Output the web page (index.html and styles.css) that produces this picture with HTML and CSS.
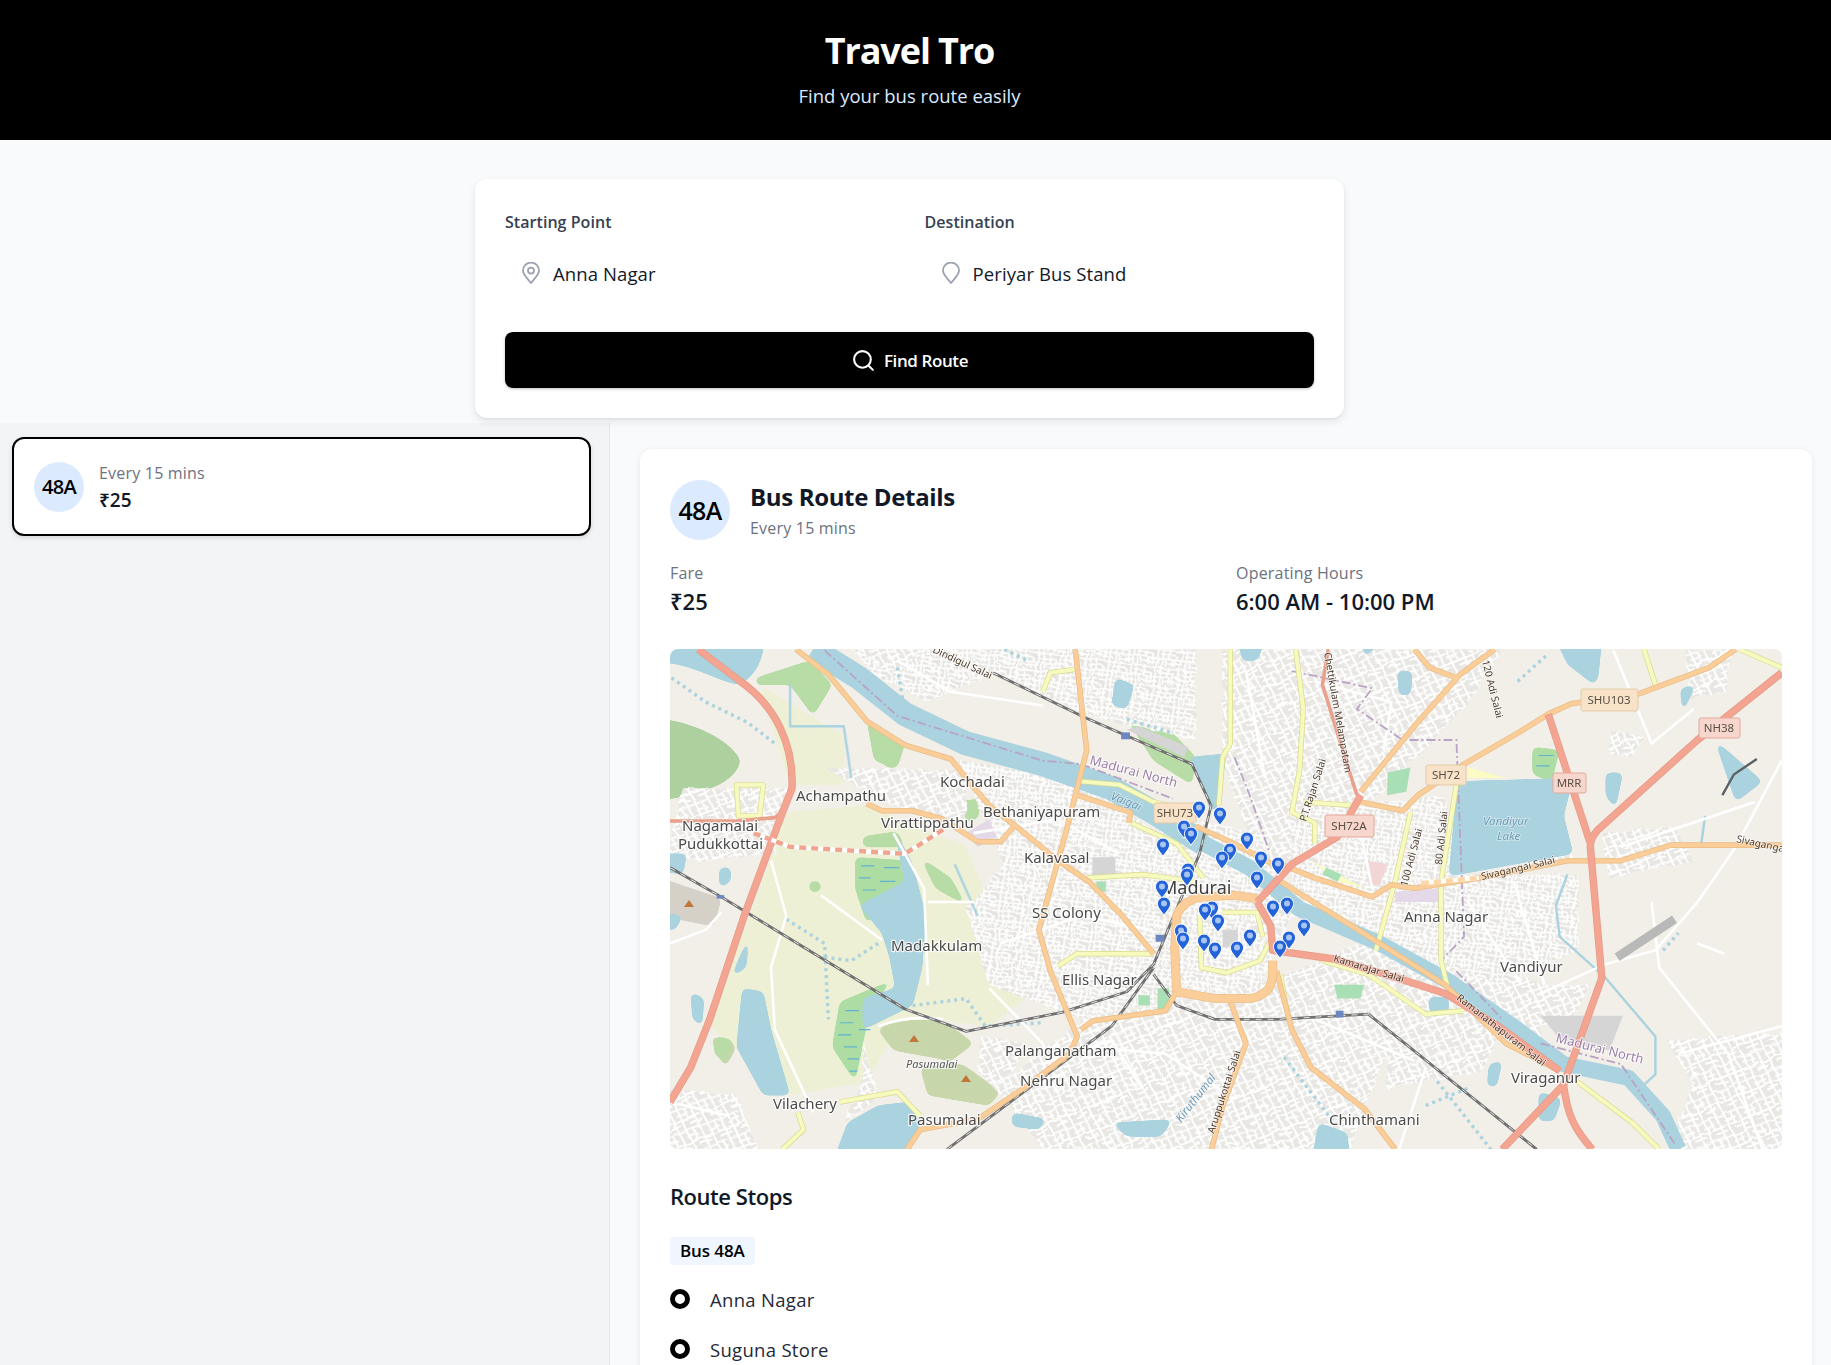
FILE: index.html
```html
<!DOCTYPE html>
<html lang="en">
<head>
<meta charset="utf-8">
<title>Travel Tro</title>
<link rel="stylesheet" href="styles.css">
</head>
<body>
<header class="hero">
  <h1 class="hero-title">Travel Tro</h1>
  <p class="hero-sub">Find your bus route easily</p>
</header>

<section class="search-area">
  <form class="search-card">
    <div class="fields">
      <div class="field">
        <div class="field-label">Starting Point</div>
        <div class="field-input">
          <svg class="field-icon" viewBox="0 0 20 22"><path d="M10 21C6.5 16.5 2 13 2 8.6a8 8 0 0 1 16 0C18 13 13.5 16.5 10 21Z"/><circle cx="10" cy="8.6" r="3"/></svg>
          <span>Anna Nagar</span>
        </div>
      </div>
      <div class="field">
        <div class="field-label">Destination</div>
        <div class="field-input">
          <svg class="field-icon" viewBox="0 0 20 22"><path d="M10 21C6.5 16.5 2 13 2 8.6a8 8 0 0 1 16 0C18 13 13.5 16.5 10 21Z"/></svg>
          <span>Periyar Bus Stand</span>
        </div>
      </div>
    </div>
    <div class="find-btn">
      <svg class="find-icon" viewBox="0 0 24 24"><circle cx="11" cy="11" r="8"/><path d="m21 21-4.3-4.3"/></svg>
      <span>Find Route</span>
    </div>
  </form>
</section>

<div class="lower">
  <aside class="sidebar">
    <div class="route-card">
      <div class="badge-sm">48A</div>
      <div class="route-card-text">
        <div class="muted">Every 15 mins</div>
        <div class="route-fare">₹25</div>
      </div>
    </div>
  </aside>

  <main class="main">
    <article class="detail">
      <div class="detail-head">
        <div class="badge-lg">48A</div>
        <div class="detail-title-box">
          <h2 class="detail-title">Bus Route Details</h2>
          <div class="muted">Every 15 mins</div>
        </div>
      </div>
      <div class="facts">
        <div>
          <div class="muted">Fare</div>
          <div class="fact-value">₹25</div>
        </div>
        <div>
          <div class="muted">Operating Hours</div>
          <div class="fact-value">6:00 AM - 10:00 PM</div>
        </div>
      </div>

      <div class="map">
        <svg class="map-svg" viewBox="0 0 1112 500" width="1112" height="500">
          <defs>
            <pattern id="st1" width="62" height="54" patternUnits="userSpaceOnUse" patternTransform="rotate(8)">
              <rect width="62" height="54" fill="#e6e4e0"/>
              <path d="M0 7H62M0 20H40M0 33H62M20 46H62M7 0V54M24 0V33M42 20V54M55 0V54M33 33V54M16 33V54" stroke="#fff" stroke-width="5" fill="none" class="plain"/>
            </pattern>
            <pattern id="st2" width="58" height="66" patternUnits="userSpaceOnUse" patternTransform="rotate(-24)">
              <rect width="58" height="66" fill="#e9e7e3"/>
              <path d="M0 10H58M0 28H34M0 44H58M24 58H58M8 0V66M26 10V44M44 0V66" stroke="#fff" stroke-width="5.4" fill="none" class="plain"/>
            </pattern>
            <filter id="wobble" x="0" y="0" width="100%" height="100%">
              <feTurbulence type="fractalNoise" baseFrequency="0.03" numOctaves="2" seed="7"/>
              <feDisplacementMap in="SourceGraphic" scale="16"/>
            </filter>
            <filter id="goo" x="-5%" y="-5%" width="110%" height="110%" color-interpolation-filters="sRGB">
              <feGaussianBlur stdDeviation="9"/>
              <feComponentTransfer><feFuncA type="linear" slope="14" intercept="-6"/></feComponentTransfer>
            </filter>
            <path id="pin" d="M0 10.4C-1.8 6.9-6.6 3.2-6.6-1.4A6.6 6.6 0 1 1 6.6-1.4C6.6 3.2 1.8 6.9 0 10.4Z"/>
            <g id="salmon">
              <path d="M100 27 210 120C300 190 350 300 345 430L320 500 220 800 130 1100 80 1240 26 1340"/>
              <g transform="translate(1411)">
                <path d="M1520 95 1300 290 1040 550C1025 570 1020 580 1020 600L1050 980 950 1290 790 1477"/>
                <path d="M910 215 1020 590"/>
                <path d="M950 1290C960 1380 980 1420 1025 1477"/>
                <path d="M420 450 360 570 240 650 150 760"/>
                <path d="M150 760 185 830 190 900 350 925 530 985 640 1025 780 1120 940 1250"/>
              </g>
            </g>
            <g id="salmonThin">
              <path d="M26 525H200L300 515 330 490"/>
              <g transform="translate(1411)"><path d="M335 27 320 130 410 450"/></g>
            </g>
            <g id="orange">
              <path d="M355 27 440 100 540 235 640 305 760 345 800 400 860 480 930 540 1040 640 1120 700 1200 790 1290 910"/>
              <path d="M540 475 580 495H660L740 520 830 585H890L925 540"/>
              <path d="M1085 27 1115 320 1060 560 990 840 1020 960 1090 1150 1070 1200 950 1300 830 1390 680 1420 645 1477"/>
              <path d="M1100 1130 1130 1105 1320 1075 1350 1020"/>
              <path d="M1090 450 1230 500 1225 530"/>
              <path d="M1400 540 1500 590 1600 650"/>
              <g transform="translate(1411)">
                <path d="M210 650 300 690 450 745 500 710 560 720 730 690 960 640H1100L1230 595H1520"/>
                <path d="M420 470 530 495 570 450 610 420 690 360 830 270 910 215 970 185 1150 155 1330 80 1400 27"/>
                <path d="M420 440 560 250 680 100 770 27"/>
                <path d="M560 27 600 80 670 110"/>
                <path d="M200 960 240 1130 290 1240 430 1360 510 1477"/>
                <path d="M80 1050 120 1170 60 1350 30 1477"/>
                <path d="M210 700 470 880 640 1000 800 1170 940 1250"/>
              </g>
            </g>
            <g id="ring">
              <path d="M1350 1020 1345 900 1350 800C1360 770 1380 750 1420 745L1500 740 1560 750"/>
              <path d="M1350 1020 1450 1040H1541C1590 1030 1600 1000 1601 970V930"/>
            </g>
            <g id="yellow">
              <path d="M1000 150 1020 95 1085 85"/>
              <path d="M1100 410 1200 420 1290 470 1330 480"/>
              <path d="M1115 690 1260 680 1400 700"/>
              <path d="M1040 945 1090 910H1290"/>
              <path d="M1490 27V300L1470 340 1460 480"/>
              <path d="M1230 530 1350 590 1420 690"/>
              <path d="M1410 800 1415 950 1480 965 1568 930 1600 860"/>
              <path d="M1470 790 1560 790 1575 860"/>
              <path d="M200 420H270L260 510H205Z"/>
              <path d="M470 1340 620 1310 680 1380"/>
              <path d="M360 1370 375 1420 320 1477"/>
              <g transform="translate(1411)">
                <path d="M250 27 270 200 260 380 240 500 300 530 300 590"/>
                <path d="M270 470 400 480"/>
                <path d="M550 500 510 700 460 900"/>
                <path d="M670 420 630 700V930L650 1020"/>
                <path d="M320 930 440 970 590 1085 690 1075"/>
                <path d="M210 970 230 1090"/>
                <path d="M985 1280 1130 1400 1200 1477"/>
                <path d="M1160 27 1190 130"/>
                <path d="M1410 27 1520 80"/>
              </g>
            </g>
            <g id="rail">
              <path d="M26 660 160 745 640 1070 800 1135 1050 1080 1220 1020 1290 940 1410 620 1440 480 1390 360 1110 225 870 95"/>
              <path d="M750 1477 1180 1120 1290 950"/>
              <path d="M1290 970 1350 1060 1450 1100H1611L1851 1085"/>
              <g transform="translate(1411)"><path d="M440 1085 880 1477"/></g>
            </g>
          </defs>

          <rect class="land" width="1112" height="500"/>
          <g transform="translate(-10 -9) scale(.3827 .34483)">
            <!-- land use -->
            <g filter="url(#goo)">
              <path class="farm" d="M330 500 540 480 800 600 870 800 1000 1000 860 1120 640 1090 540 1280 340 1320 130 1120 300 600Z"/>
              <path class="farm" d="M260 130 480 280V420H340Z"/>
              <path class="farm" d="M1130 1090 1320 1090 1290 1130 1150 1140Z"/>
            </g>
            <g filter="url(#goo)">
              <path class="forest" d="M0 230C100 240 190 300 210 350 200 400 150 440 0 465Z"/>
              <path class="scrub" d="M570 1130C600 1100 720 1090 760 1120L820 1170 760 1220 610 1190Z"/>
              <path class="scrub" d="M680 1240 790 1230 890 1310 860 1350 700 1320Z"/>
              <path class="scrub" d="M130 1150 200 1180 170 1240Z"/>
              <path class="scrub" d="M50 1310 170 1370 130 1390 60 1350Z"/>
              <path class="rock" d="M0 690 160 750 140 830 0 800Z"/>
              <path class="grassy" d="M250 110 390 60 450 130 400 220 340 130 250 130Z"/>
              <path class="grassy" d="M540 230 640 300 620 370 560 350Z"/>
              <path class="grassy" d="M610 400 700 390 760 420 720 460 620 440Z"/>
              <path class="grassy" d="M770 470 840 460 830 520 770 530Z"/>
              <path class="grassy" d="M530 570 620 555 640 600 530 600Z"/>
              <path class="grassy" d="M680 630 760 690 800 770 720 720Z"/>
              <path class="grassy" d="M1220 230 1340 270 1400 340 1390 420 1290 350Z"/>
              <path class="grassy" d="M590 330H620V370H590Z"/>
              <path class="grassy" d="M390 700H420V730H390Z"/>
              <path class="grassy" d="M150 1150 190 1160 170 1220 140 1200Z"/>
            </g>
            <!-- streets -->
            <g filter="url(#wobble)">
              <path class="urban-a" d="M500 27H1400V290L1120 220 870 95 700 180 560 100Z"/>
              <path class="urban-a" d="M780 350 1100 400 1300 560 1360 900 1290 1050 1100 1100 860 1000 800 780 900 650Z"/>
              <path class="urban-b" d="M1100 1100 1568 1000 2000 800 2300 1000V1150L1900 1200 1800 1477H1000L880 1300Z"/>
              <path class="urban-b" d="M1470 27H2200L2100 200 1850 480 1800 650 1568 660 1470 350Z"/>
              <path class="urban-a" d="M1300 500 1568 560 1650 800 1568 1000 1300 1050Z"/>
              <path class="urban-a" d="M1650 500 2050 450 2090 680H2400V900L2200 1000 1650 800Z"/>
              <path class="urban-b" d="M60 430H340L300 620 100 640 20 620Z"/>
              <path class="urban-b" d="M430 370 800 380V530L600 480Z"/>
              <path class="urban-b" d="M20 1300 200 1320 260 1490H20Z"/>
              <path class="urban-b" d="M530 1150 570 1330 480 1400 530 1270Z"/>
              <path class="urban-b" d="M840 1150 960 1170 890 1320 830 1250Z"/>
              <path class="urban-b" d="M520 27H700L600 100Z"/>
              <path class="urban-b" d="M2460 560 2650 540 2700 640 2480 690Z"/>
              <path class="urban-b" d="M2630 1160 2940 1140V1490H2630L2700 1290Z"/>
              <path class="urban-b" d="M2220 500 2350 510 2390 640 2230 640Z"/>
              <path class="urban-b" d="M2260 1000 2430 1000 2380 1110 2260 1130Z"/>
              <path class="urban-b" d="M2680 30H2800L2780 150 2690 170Z"/>
              <path class="urban-b" d="M2480 260 2570 280 2540 340 2480 330Z"/>
              <path class="urban-b" d="M1900 1150 2200 1130 2150 1250 1900 1300Z"/>
            </g>
            <!-- patches -->
            <path class="pink" d="M1851 640 1901 650 1881 710H1851Z"/>
            <path class="lilac" d="M1921 730 2031 720 2051 760H1921Z"/>
            <path class="pale" d="M1701 640 1841 720 1771 700Z"/>
            <path class="pale" d="M2111 370 2211 400 2111 400Z"/>
            <path class="lilac" d="M800 560 860 520 880 570 830 600Z"/>
            <path class="gray" d="M2301 1090H2516L2481 1190 2361 1170Z"/>
            <path class="gray" d="M1470 840H1510V890H1470Z"/>
            <path class="gray" d="M1130 630H1190V690H1130Z"/>
            <path class="park" d="M1761 1000H1840L1830 1040H1770Z"/>
            <path class="park" d="M1901 385 1961 370 1950 440 1900 450Z"/>
            <path class="park" d="M1250 1030 1280 1030 1280 1060 1250 1060Z"/>
            <path class="park" d="M1300 1010 1330 1010 1330 1070 1300 1070Z"/>
            <path class="park" d="M1140 700H1165V730H1140Z"/>
            <path class="park" d="M1741 660 1781 680 1771 700 1731 680Z"/>
            <g filter="url(#goo)">
              <path class="wetland" d="M510 630 650 640 620 760 540 820 510 720Z"/>
              <path class="wetland" d="M470 1050 610 985 550 1060 510 1280 450 1180Z"/>
              <path class="wetland" d="M2280 310 2350 320 2330 410 2280 390Z"/>
            </g>
            <path class="wet-lines" d="M525 655H560M585 660H625M520 690H550M575 700H615M530 725H565M585 735H610M540 765H575M550 795H575M485 1075H520M545 1045H590M470 1110H505M530 1090H565M465 1145H500M520 1130H550M480 1180H515M490 1215H520M495 1250H515M2295 335H2335M2290 365H2325"/>
            <path class="gray" d="M1250 250 1380 310 1370 340 1220 260Z"/>
            <!-- water -->
            <g filter="url(#goo)">
              <path class="water" d="M0 65C80 65 150 120 210 130 250 100 270 60 272 0H0Z"/>
              <path class="water" d="M610 540 660 650 695 800 685 950 660 1060 530 1130 530 1040 615 1010 600 920 580 850 520 770 640 700Z"/>
              <path class="water" d="M215 1010 270 1020 290 1130 340 1320 270 1320 200 1180Z"/>
              <path class="water" d="M460 1490 490 1400 570 1350 650 1340 680 1400 650 1490Z"/>
              <path class="water" d="M1180 1400 1340 1390 1310 1440 1220 1440Z"/>
              <path class="water" d="M920 1370 1010 1390 990 1420 920 1410Z"/>
              <path class="water" d="M1380 340 1480 330 1460 480 1440 500 1400 370Z"/>
              <path class="water" d="M1190 110 1240 130 1220 200 1180 190Z"/>
              <path class="water" d="M0 620 70 620 60 680 0 670Z"/>
              <path class="water" d="M0 790 60 800 40 840 0 840Z"/>
              <path class="water" d="M80 1020 115 1040 110 1120 85 1100Z"/>
              <path class="water" d="M185 980 235 850 225 950Z"/>
              <path class="water" d="M155 660 185 660 185 700 155 720Z"/>
              <g transform="translate(1411)">
                <path class="water" d="M680 410 975 400 950 510 975 620 650 685 670 440Z"/>
                <path class="water" d="M930 0H1050L1040 110 1030 130 960 70Z"/>
                <path class="water" d="M100 0H170L150 60H110Z"/>
                <path class="water" d="M420 0H480L430 50Z"/>
                <path class="water" d="M515 90H555L550 160 520 160Z"/>
                <path class="water" d="M1060 385 1105 385 1085 490 1060 450Z"/>
                <path class="water" d="M1345 290 1470 410 1400 470Z"/>
                <path class="water" d="M295 1490 310 1400 385 1430 390 1490Z"/>
                <path class="water" d="M1255 140 1295 130 1260 215Z"/>
                <path class="water" d="M885 1310 945 1330 925 1395 885 1395Z"/>
                <path class="water" d="M755 1230 790 1220 775 1295 750 1295Z"/>
                <path class="water" d="M598 1035H650V1080H598Z"/>
              </g>
            </g>
            <g class="stream">
              <path d="M340 130V250H480L500 400"/>
              <path d="M770 650 830 800"/>
              <g transform="translate(1411)">
                <path d="M1060 980 1190 1150V1260L1150 1300"/>
                <path d="M960 680 930 770 940 860 1030 950 1060 980"/>
                <path d="M1320 510 1310 590"/>
              </g>
            </g>
            <path class="river-w" d="M400 27 520 110 640 215 800 300 1000 360 1180 430 1290 500 1420 590"/>
            <path class="river-e" d="M1420 590 1540 660 1671 780 1881 880 2061 990 2241 1130 2361 1230 2531 1270 2621 1380 2661 1477"/>
            <g class="dots">
              <path d="M30 110 120 180 230 240 300 300"/>
              <path d="M620 80 640 210"/>
              <path d="M330 810 430 880 440 1100"/>
              <path d="M430 920 500 930 570 880"/>
              <path d="M660 1060 800 1040 850 1120 1000 1110"/>
              <path d="M1220 230 1340 270"/>
              <path d="M900 27 960 60"/>
              <g transform="translate(1411)">
                <path d="M830 120 910 40"/>
                <path d="M590 1350 700 1300"/>
                <path d="M220 1210 350 1400"/>
                <path d="M620 1280 760 1477"/>
                <path d="M1210 900 1250 850"/>
              </g>
            </g>
            <g class="white-road">
              <path d="M26 880 120 840 160 790"/>
              <path d="M290 640 330 800 290 950 300 1130 400 1370"/>
              <path d="M610 560 690 720 700 1000"/>
              <path d="M420 740 580 870"/>
              <path d="M26 1340 180 1380"/>
              <path d="M700 760H820"/>
              <path d="M570 1120C620 1100 680 1090 740 1100"/>
              <path d="M860 1010 1000 1170 1040 1300"/>
              <path d="M890 880 1100 800 1280 840"/>
              <path d="M820 560 1040 520 1200 620"/>
              <path d="M620 60 760 150 1000 190"/>
              <path d="M1120 1180 1320 1200 1500 1330"/>
              <path d="M1000 1230 1180 1160 1260 1300"/>
              <g transform="translate(1411)">
                <path d="M1520 350 1400 600 1300 760 1190 900 1060 940 880 1030"/>
                <path d="M1180 760 1200 950 1380 1200 1470 1477"/>
                <path d="M1100 600 1450 470"/>
                <path d="M420 560 450 720"/>
                <path d="M520 1477 590 1240"/>
                <path d="M1250 1200 1520 1120"/>
                <path d="M700 760 840 1000"/>
                <path d="M820 700 900 1000"/>
                <path d="M300 1100 560 1220"/>
                <path d="M1080 30 1180 300 1290 200"/>
                <path d="M120 90 170 400"/>
                <path d="M300 120 500 180 480 320"/>
                <path d="M1300 880 1370 910"/>
              </g>
            </g>
            <g class="admin">
              <path d="M430 30 620 220 1000 350 1100 360 1340 460"/>
              <g transform="translate(1411)">
                <path d="M890 1170 1100 1230 1240 1460"/>
                <path d="M90 340 130 450 180 610"/>
                <path d="M240 90 450 140 410 200 530 290H670L690 860 630 930"/>
                <path d="M670 960 790 1100"/>
              </g>
            </g>
            <use href="#yellow" class="r-ye-c"/>
            <use href="#yellow" class="r-ye"/>
            <use href="#rail" class="r-rail-c"/>
            <use href="#rail" class="r-rail"/>
            <use href="#orange" class="r-or-c"/>
            <use href="#orange" class="r-or"/>
            <use href="#ring" class="r-ring-c"/>
            <use href="#ring" class="r-ring"/>
            <use href="#salmonThin" class="r-sa-thin"/>
            <use href="#salmon" class="r-sa-c"/>
            <use href="#salmon" class="r-sa"/>
            <path class="dash-base" d="M245 560 340 600 640 620 740 550"/>
            <path class="dash-top" d="M245 560 340 600 640 620 740 550"/>
            <path class="dash-base" d="M1991 705 2140 690"/>
            <path class="dash-top2" d="M1991 705 2140 690"/>
            <path class="strip" d="M2501 920 2651 810"/>
            <path class="bridge" d="M2776 450 2806 390 2866 345"/>
            <path class="station" d="M1205 268H1228V288H1205Z"/>
            <path class="station" d="M1295 855H1318V875H1295Z"/>
            <path class="station" d="M1766 1075H1786V1095H1766Z"/>
            <path class="station" d="M148 740H168V750H148Z"/>
          </g>

          <!-- peaks -->
          <path class="peak" d="M19 251 24 258H14Z"/>
          <path class="peak" d="M244 386 249 393H239Z"/>
          <path class="peak" d="M296 426 301 433H291Z"/>

          <!-- labels -->
          <g class="labels">
            <text x="126" y="152">Achampathu</text>
            <text x="12" y="182">Nagamalai</text>
            <text x="8" y="200">Pudukkottai</text>
            <text x="211" y="179">Virattippathu</text>
            <text x="270" y="138">Kochadai</text>
            <text x="313" y="168">Bethaniyapuram</text>
            <text x="354" y="214">Kalavasal</text>
            <text x="362" y="269">SS Colony</text>
            <text x="221" y="302">Madakkulam</text>
            <text x="392" y="336">Ellis Nagar</text>
            <text x="335" y="407">Palanganatham</text>
            <text x="350" y="437">Nehru Nagar</text>
            <text x="238" y="476">Pasumalai</text>
            <text x="103" y="460">Vilachery</text>
            <text x="734" y="273">Anna Nagar</text>
            <text x="830" y="323">Vandiyur</text>
            <text x="841" y="434">Viraganur</text>
            <text x="659" y="476">Chinthamani</text>
            <text class="city" x="491" y="245">Madurai</text>
          </g>
          <text class="hill-label" x="236" y="419">Pasumalai</text>
          <g class="water-labels">
            <text x="813" y="176">Vandiyur</text>
            <text x="827" y="191">Lake</text>
            <text transform="translate(440 150) rotate(22)">Vaigai</text>
            <text transform="translate(511 474) rotate(-52)">Kiruthumal</text>
          </g>
          <g class="admin-labels">
            <text transform="translate(419 115) rotate(15)">Madurai North</text>
            <text transform="translate(885 393) rotate(14)">Madurai North</text>
          </g>
          <g class="road-labels">
            <text transform="translate(262 3) rotate(25)">Dindigul Salai</text>
            <text transform="translate(654 4) rotate(80)">Chettikulam Melampatam</text>
            <text transform="translate(636 173) rotate(-72)">P.T.Rajan Salai</text>
            <text transform="translate(737 238) rotate(-75)">100 Adi Salai</text>
            <text transform="translate(772 216) rotate(-84)">80 Adi Salai</text>
            <text transform="translate(812 12) rotate(76)">120 Adi Salai</text>
            <text transform="translate(812 231) rotate(-13)">Sivagangai Salai</text>
            <text transform="translate(1066 193) rotate(12)">Sivagangai</text>
            <text transform="translate(663 312) rotate(17)">Kamarajar Salai</text>
            <text transform="translate(786 350) rotate(38)">Ramanathapuram Salai</text>
            <text transform="translate(544 485) rotate(-72)">Aruppukottai Salai</text>
          </g>

          <!-- shields -->
          <g class="shield-or"><rect x="484" y="154" width="42" height="20" rx="2"/><text x="505" y="168">SHU73</text></g>
          <g class="shield-or"><rect x="911" y="40" width="57" height="22" rx="2"/><text x="939" y="55">SHU103</text></g>
          <g class="shield-or"><rect x="756" y="116" width="40" height="20" rx="2"/><text x="776" y="130">SH72</text></g>
          <g class="shield-re"><rect x="1029" y="69" width="41" height="20" rx="2"/><text x="1049" y="83">NH38</text></g>
          <g class="shield-re"><rect x="883" y="124" width="33" height="20" rx="2"/><text x="899" y="138">MRR</text></g>
          <g class="shield-re"><rect x="655" y="166" width="49" height="22" rx="2"/><text x="679" y="181">SH72A</text></g>

          <!-- stops -->
          <g class="pins">
            <g transform="translate(529 160)"><use href="#pin"/><circle r="3" cy="-1.5"/></g>
            <g transform="translate(550 166)"><use href="#pin"/><circle r="3" cy="-1.5"/></g>
            <g transform="translate(514 179)"><use href="#pin"/><circle r="3" cy="-1.5"/></g>
            <g transform="translate(521 186)"><use href="#pin"/><circle r="3" cy="-1.5"/></g>
            <g transform="translate(493 197)"><use href="#pin"/><circle r="3" cy="-1.5"/></g>
            <g transform="translate(518 222)"><use href="#pin"/><circle r="3" cy="-1.5"/></g>
            <g transform="translate(517 227)"><use href="#pin"/><circle r="3" cy="-1.5"/></g>
            <g transform="translate(492 239)"><use href="#pin"/><circle r="3" cy="-1.5"/></g>
            <g transform="translate(494 256)"><use href="#pin"/><circle r="3" cy="-1.5"/></g>
            <g transform="translate(511 283)"><use href="#pin"/><circle r="3" cy="-1.5"/></g>
            <g transform="translate(513 291)"><use href="#pin"/><circle r="3" cy="-1.5"/></g>
            <g transform="translate(534 293)"><use href="#pin"/><circle r="3" cy="-1.5"/></g>
            <g transform="translate(545 301)"><use href="#pin"/><circle r="3" cy="-1.5"/></g>
            <g transform="translate(567 300)"><use href="#pin"/><circle r="3" cy="-1.5"/></g>
            <g transform="translate(580 288)"><use href="#pin"/><circle r="3" cy="-1.5"/></g>
            <g transform="translate(542 260)"><use href="#pin"/><circle r="3" cy="-1.5"/></g>
            <g transform="translate(535 262)"><use href="#pin"/><circle r="3" cy="-1.5"/></g>
            <g transform="translate(548 273)"><use href="#pin"/><circle r="3" cy="-1.5"/></g>
            <g transform="translate(577 191)"><use href="#pin"/><circle r="3" cy="-1.5"/></g>
            <g transform="translate(560 202)"><use href="#pin"/><circle r="3" cy="-1.5"/></g>
            <g transform="translate(552 210)"><use href="#pin"/><circle r="3" cy="-1.5"/></g>
            <g transform="translate(591 210)"><use href="#pin"/><circle r="3" cy="-1.5"/></g>
            <g transform="translate(608 216)"><use href="#pin"/><circle r="3" cy="-1.5"/></g>
            <g transform="translate(587 230)"><use href="#pin"/><circle r="3" cy="-1.5"/></g>
            <g transform="translate(603 259)"><use href="#pin"/><circle r="3" cy="-1.5"/></g>
            <g transform="translate(617 256)"><use href="#pin"/><circle r="3" cy="-1.5"/></g>
            <g transform="translate(634 278)"><use href="#pin"/><circle r="3" cy="-1.5"/></g>
            <g transform="translate(619 290)"><use href="#pin"/><circle r="3" cy="-1.5"/></g>
            <g transform="translate(610 299)"><use href="#pin"/><circle r="3" cy="-1.5"/></g>
          </g>
        </svg>
      </div>

      <h3 class="stops-title">Route Stops</h3>
      <div class="bus-tag">Bus 48A</div>
      <ul class="stops">
        <li class="stop"><span class="stop-dot"></span>Anna Nagar</li>
        <li class="stop"><span class="stop-dot"></span>Suguna Store</li>
      </ul>
    </article>
  </main>
</div>
</body>
</html>
```

FILE: styles.css
```css
* { box-sizing: border-box; }
html, body { margin: 0; height: 1365px; overflow: hidden; }
body {
  width: 1831px;
  background: #f9fafb;
  color: #111827;
  font-family: "Open Sans", "Noto Sans", sans-serif;
}

.hero {
  height: 140px;
  padding: 30px 12px 0 0;
  background: #000;
  color: #fff;
  text-align: center;
}
.hero-title { margin: 0; font-size: 36px; line-height: 42px; font-weight: 700; letter-spacing: -1.1px; }
.hero-sub { margin: 11px 0 0; font-size: 18.5px; line-height: 26px; color: #dbeafe; }

.search-area { height: 283px; padding: 39px 12px 0 0; display: flex; justify-content: center; position: relative; z-index: 2; }
.search-card {
  width: 869px;
  height: 239px;
  padding: 30px;
  background: #fff;
  border-radius: 12px;
  box-shadow: 0 4px 8px rgba(0,0,0,.08), 0 1px 3px rgba(0,0,0,.06);
}
.fields { display: grid; grid-template-columns: 1fr 1fr; gap: 30px; }
.field-label { margin-top: 1px; font-size: 16px; line-height: 24px; font-weight: 600; color: #374151; letter-spacing: .05px; }
.field-input { display: flex; align-items: center; gap: 12px; height: 40px; margin-top: 19px; padding-left: 16px; font-size: 18.5px; letter-spacing: .1px; color: #111827; }
.field-icon { width: 20px; height: 22px; fill: none; stroke: #9ca3af; stroke-width: 1.8; stroke-linecap: round; stroke-linejoin: round; }
.find-btn {
  display: flex; align-items: center; justify-content: center; gap: 8px;
  height: 56px; margin-top: 39px;
  background: #000; color: #fff; border-radius: 8px;
  font-size: 17px; font-weight: 600; letter-spacing: -.4px;
  box-shadow: 0 1px 3px rgba(0,0,0,.25);
}
.find-icon { width: 25px; height: 25px; fill: none; stroke: #fff; stroke-width: 2; stroke-linecap: round; stroke-linejoin: round; }

.lower { display: flex; height: 942px; }
.sidebar { width: 610px; padding: 14px 18px 0 12px; background: #f3f4f6; border-right: 1px solid #e5e7eb; }
.route-card {
  display: flex; align-items: center; gap: 15px;
  height: 99px; padding: 0 20px;
  background: #fff; border: 2px solid #000; border-radius: 12px;
  box-shadow: 0 2px 5px rgba(0,0,0,.12);
}
.badge-sm, .badge-lg { display: flex; align-items: center; justify-content: center; flex: none; border-radius: 50%; background: #dbeafe; color: #000; font-weight: 600; }
.badge-sm { width: 50px; height: 50px; font-size: 20px; letter-spacing: -.7px; }
.muted { font-size: 16px; line-height: 24px; color: #6b7280; letter-spacing: .2px; }
.route-fare { margin-top: 2px; font-size: 19px; line-height: 26px; font-weight: 600; color: #111827; }

.main { flex: 1; padding: 26px 19px 0 30px; }
.detail { height: 1000px; padding: 30px; background: #fff; border-radius: 12px; box-shadow: 0 1px 6px rgba(0,0,0,.08); }
.detail-head { display: flex; align-items: center; gap: 20px; }
.badge-lg { width: 60px; height: 60px; font-size: 25px; letter-spacing: -.7px; }
.detail-title-box { padding-top: 2px; }
.detail-title { margin: 0 0 3px; font-size: 24px; line-height: 32px; font-weight: 700; color: #111827; letter-spacing: -.35px; }
.facts { display: grid; grid-template-columns: 1fr 1fr; gap: 20px; margin-top: 21px; }
.fact-value { font-size: 22px; line-height: 32px; font-weight: 600; color: #111827; }

.map { height: 500px; margin-top: 32px; border-radius: 8px; overflow: hidden; }
.map-svg { display: block; filter: blur(.35px); font-family: "Noto Sans", "Open Sans", sans-serif; }
.map-svg path { vector-effect: non-scaling-stroke; }
.map-svg .plain { vector-effect: none; }
.land { fill: #f2efe9; }
.farm { fill: #eef0d5; }
.forest { fill: #add19e; }
.scrub { fill: #c8d7ab; }
.rock { fill: #d5d1c8; }
.grassy { fill: #b7dca6; }
.urban-a { fill: url(#st1); }
.urban-b { fill: url(#st2); }
.pink { fill: #f2d6d6; }
.lilac { fill: #e3d9e8; }
.pale { fill: #fbfbc4; }
.gray { fill: #d5d5d5; }
.park { fill: #a9dfb4; }
.wetland { fill: #aedda4; }
.wet-lines { fill: none; stroke: #62b1d4; stroke-width: 1.2; }
.water { fill: #aad3df; }
.stream { fill: none; stroke: #aad3df; stroke-width: 2.4; }
.river-w { fill: none; stroke: #aad3df; stroke-width: 24; stroke-linejoin: round; }
.river-e { fill: none; stroke: #aad3df; stroke-width: 16; stroke-linejoin: round; }
.dots { fill: none; stroke: #aad3df; stroke-width: 3.4; stroke-dasharray: 3 4; }
.white-road { fill: none; stroke: #fff; stroke-width: 2.6; stroke-linejoin: round; }
.admin { fill: none; stroke: #b9a3c4; stroke-width: 1.8; stroke-dasharray: 9 3 2 3; }
.r-ye-c { fill: none; stroke: #d9d98e; stroke-width: 5.4; stroke-linejoin: round; }
.r-ye { fill: none; stroke: #f7fabf; stroke-width: 4; stroke-linejoin: round; }
.r-or-c { fill: none; stroke: #e8bb83; stroke-width: 5.6; stroke-linejoin: round; }
.r-or { fill: none; stroke: #fbcd98; stroke-width: 4.2; stroke-linejoin: round; }
.r-ring-c { fill: none; stroke: #eabf8a; stroke-width: 9; stroke-linejoin: round; }
.r-ring { fill: none; stroke: #fbcd98; stroke-width: 7.6; stroke-linejoin: round; }
.r-sa-c { fill: none; stroke: #e49a87; stroke-width: 7.4; stroke-linejoin: round; }
.r-sa { fill: none; stroke: #f3a592; stroke-width: 6; stroke-linejoin: round; }
.r-sa-thin { fill: none; stroke: #e9a08c; stroke-width: 3.6; stroke-linejoin: round; }
.r-rail-c { fill: none; stroke: #707070; stroke-width: 2.8; stroke-linejoin: round; }
.r-rail { fill: none; stroke: #e6e6e6; stroke-width: 1; stroke-dasharray: 6 6; stroke-linejoin: round; }
.dash-base { fill: none; stroke: #fff; stroke-width: 4.4; }
.dash-top { fill: none; stroke: #f0a48f; stroke-width: 4.4; stroke-dasharray: 7 5; }
.dash-top2 { fill: none; stroke: #fcd6a4; stroke-width: 4.4; stroke-dasharray: 7 5; }
.strip { fill: none; stroke: #b9b9b9; stroke-width: 9; }
.bridge { fill: none; stroke: #5c6166; stroke-width: 2.4; }
.station { fill: #6f87c0; }
.peak { fill: #c1763a; }

.labels text {
  font-size: 15px; fill: #4a4a4a;
  paint-order: stroke; stroke: rgba(255,255,255,.85); stroke-width: 2.4px; stroke-linejoin: round;
}
.labels .city { font-size: 18px; fill: #3d3d3d; }
.hill-label { font-size: 11px; font-style: italic; fill: #555; paint-order: stroke; stroke: rgba(255,255,255,.7); stroke-width: 2px; }
.water-labels text { font-size: 11.5px; font-style: italic; fill: #6e9ab5; paint-order: stroke; stroke: rgba(255,255,255,.5); stroke-width: 1.5px; }
.admin-labels text { font-size: 13px; fill: #9c7fa8; paint-order: stroke; stroke: rgba(255,255,255,.8); stroke-width: 2px; }
.road-labels text { font-size: 10px; fill: #4a3a2c; paint-order: stroke; stroke: rgba(255,255,255,.6); stroke-width: 1.5px; }
.shield-or rect { fill: #f8e2c8; stroke: #e3cba9; }
.shield-re rect { fill: #f6d6cd; stroke: #e5a899; }
.shield-or text, .shield-re text { font-size: 11.5px; fill: #5a5046; text-anchor: middle; }
.pins use { fill: #2563d9; stroke: #fff; stroke-width: 1; }
.pins circle { fill: #a8c5f2; }

.stops-title { margin: 35px 0 0; font-size: 22px; line-height: 24px; font-weight: 600; color: #111827; letter-spacing: -.45px; }
.bus-tag { display: inline-block; height: 28px; margin-top: 29px; padding: 0 10px; background: #eff6ff; border-radius: 4px; font-size: 17px; line-height: 28px; font-weight: 600; color: #000; letter-spacing: -.1px; }
.stops { list-style: none; margin: 0; padding: 0; }
.stop { display: flex; align-items: center; gap: 20px; height: 50px; font-size: 18.5px; color: #1f2937; letter-spacing: .3px; }
.stop:first-child { margin-top: 9px; }
.stop-dot { width: 20px; height: 20px; border: 5px solid #000; border-radius: 50%; background: #fff; }
```
